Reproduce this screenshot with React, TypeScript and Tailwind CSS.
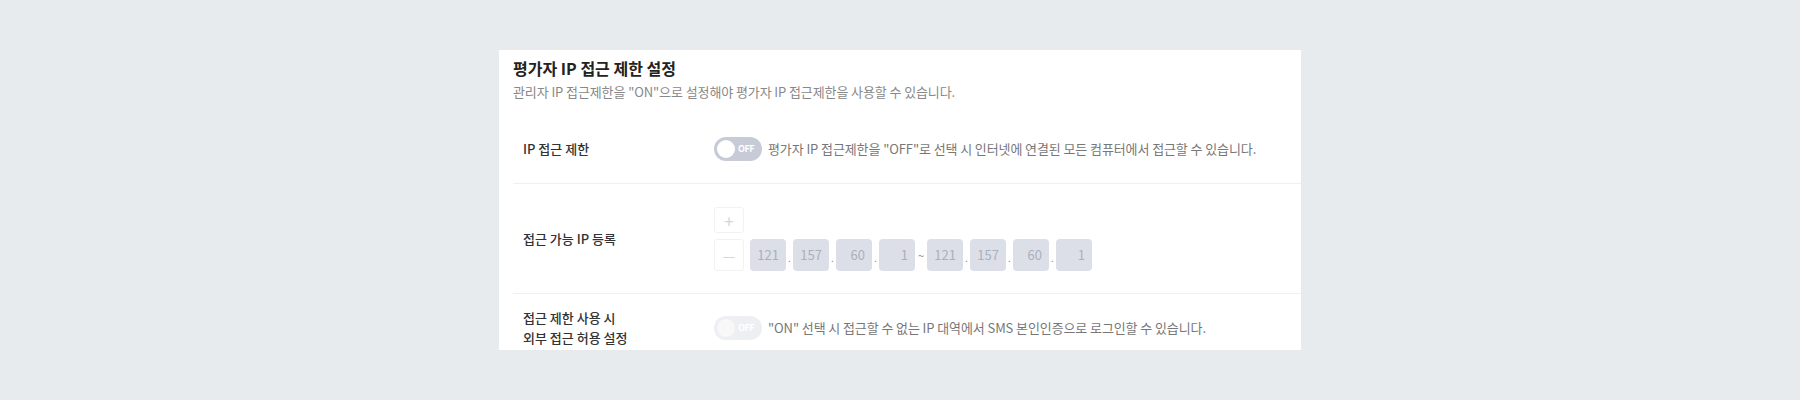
import React from 'react'

const font = { fontFamily: '"Noto Sans CJK KR", "Noto Sans", sans-serif' }

function Toggle({ disabled = false }: { disabled?: boolean }) {
  return (
    <div
      className={`relative flex h-[24px] w-[48px] shrink-0 items-center rounded-full ${
        disabled ? 'bg-[#eeeff2]' : 'bg-[#c7cad7]'
      }`}
    >
      <span
        className={`ml-[3px] h-[18px] w-[18px] rounded-full ${disabled ? 'bg-[#f8f8f9]' : 'bg-white'}`}
      />
      <span className="ml-[3px] text-[9px] font-bold tracking-[-0.5px] text-white">OFF</span>
    </div>
  )
}

function IpBox({ value }: { value: string }) {
  return (
    <div className="flex h-[32px] w-[36px] items-center justify-end rounded-[4px] bg-[#dcdfe8] pr-[7px] text-[13px] text-[#aab0bd]">
      {value}
    </div>
  )
}

function Dot() {
  return <span className="flex w-[7px] items-end justify-center pb-[8px] text-[10px] leading-none text-[#888]">.</span>
}

function IpRange({ ip }: { ip: string[] }) {
  return (
    <div className="flex">
      {ip.map((v, i) => (
        <React.Fragment key={i}>
          {i > 0 && <Dot />}
          <IpBox value={v} />
        </React.Fragment>
      ))}
    </div>
  )
}

export default function App() {
  const ip = ['121', '157', '60', '1']
  return (
    <div className="min-h-[400px] bg-[#e8ebee] pt-[50px]" style={font}>
      <div className="mx-auto h-[300px] w-[802px] overflow-hidden bg-white">
        <div className="pl-[14px] pt-[6px]">
          <h2 className="text-[16px] leading-6 font-bold text-[#222]">평가자 IP 접근 제한 설정</h2>
          <p className="mt-[2px] text-[13px] leading-5 tracking-[-0.1px] text-[#888]">
            관리자 IP 접근제한을 "ON"으로 설정해야 평가자 IP 접근제한을 사용할 수 있습니다.
          </p>

          <div className="mt-[13px]">
            {/* IP 접근 제한 */}
            <div className="flex h-[69px] items-center border-b border-[#f0f0f0]">
              <div className="w-[201px] pl-[10px] text-[13px] font-medium text-[#333]">IP 접근 제한</div>
              <div className="flex items-center gap-[6px]">
                <Toggle />
                <span className="text-[13px] tracking-[-0.1px] text-[#777]">
                  평가자 IP 접근제한을 "OFF"로 선택 시 인터넷에 연결된 모든 컴퓨터에서 접근할 수 있습니다.
                </span>
              </div>
            </div>

            {/* 접근 가능 IP 등록 */}
            <div className="flex h-[110px] items-center border-b border-[#f0f0f0]">
              <div className="w-[201px] pl-[10px] text-[13px] font-medium text-[#333]">접근 가능 IP 등록</div>
              <div className="flex flex-col gap-[6px] pt-[1px]">
                <button className="flex h-[26px] w-[30px] items-center justify-center rounded-[3px] border border-[#f2f2f2] text-[17px] leading-none text-[#d6d6d6]">
                  +
                </button>
                <div className="flex items-center">
                  <button className="flex h-[32px] w-[30px] items-center justify-center rounded-[3px] border border-[#f2f2f2] text-[14px] leading-none text-[#d6d6d6]">
                    —
                  </button>
                  <div className="ml-[6px] flex items-center">
                    <IpRange ip={ip} />
                    <span className="w-[12px] text-center text-[11px] text-[#888]">~</span>
                    <IpRange ip={ip} />
                  </div>
                </div>
              </div>
            </div>

            {/* 외부 접근 허용 */}
            <div className="flex h-[68px] items-center">
              <div className="w-[201px] pl-[10px] text-[13px] leading-5 font-medium text-[#333]">
                접근 제한 사용 시
                <br />
                외부 접근 허용 설정
              </div>
              <div className="flex items-center gap-[6px]">
                <Toggle disabled />
                <span className="text-[13px] tracking-[-0.1px] text-[#777]">
                  "ON" 선택 시 접근할 수 없는 IP 대역에서 SMS 본인인증으로 로그인할 수 있습니다.
                </span>
              </div>
            </div>
          </div>
        </div>
      </div>
    </div>
  )
}
